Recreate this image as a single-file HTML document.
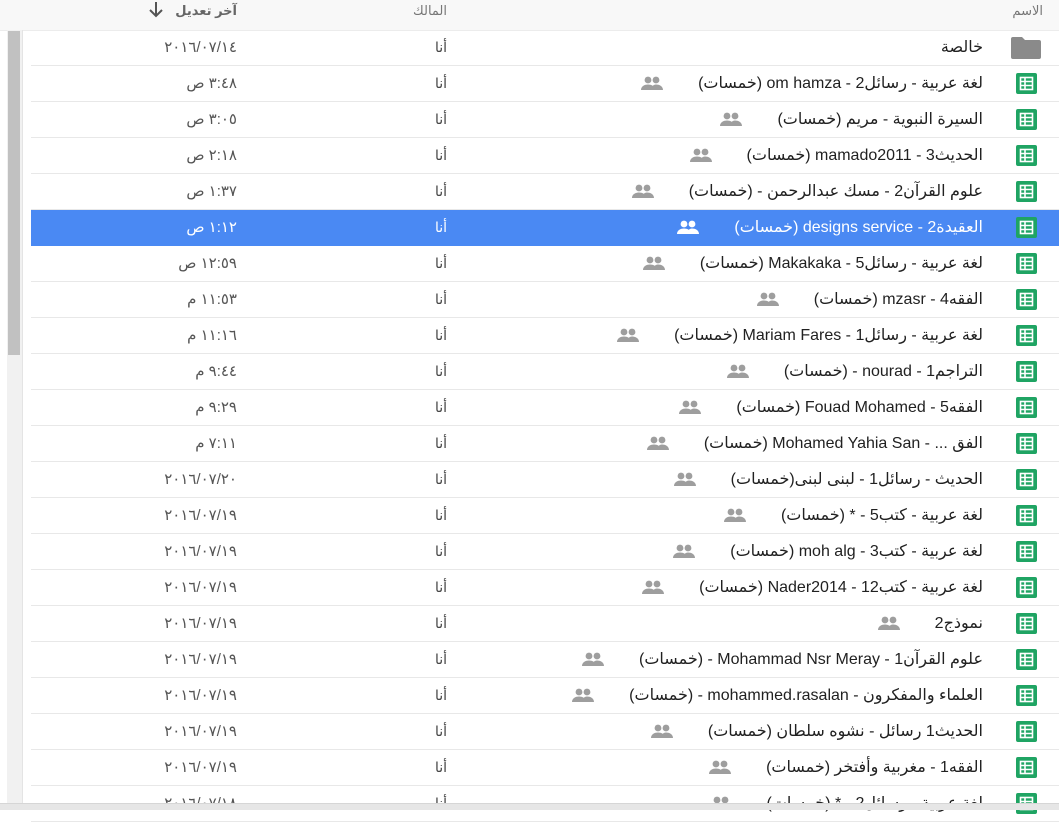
<!DOCTYPE html>
<html><head><meta charset="utf-8"><style>
body{margin:0;width:1059px;height:809px;overflow:hidden;background:#fff;font-family:"Liberation Sans","DejaVu Sans",sans-serif;position:relative}
.hdr{position:absolute;left:0;top:0;width:1059px;height:30px;background:#f8f8f8;border-bottom:1px solid #ececec}
.h{position:absolute;top:3px;font-size:13px;color:#777;direction:rtl}
.track{position:absolute;left:7px;top:30px;width:15px;height:779px;background:#f1f1f1;border-right:1px solid #e4e4e4}
.thumb{position:absolute;left:8px;top:31px;width:12px;height:324px;background:#c1c1c1}
.row{position:absolute;left:31px;width:1028px;height:35px;border-bottom:1px solid #e8e8e8}
.row.sel{background:#4a89f3;border-bottom-color:#4a89f3}
.nm{position:absolute;right:76px;top:7px;font-size:16px;color:#212121;direction:rtl;white-space:nowrap;display:flex;align-items:center}
.sel .nm,.sel .ow,.sel .dt{color:#fff}
.ppl{margin-right:34px;display:inline-block;width:24px;height:16px}
.ow{position:absolute;right:612px;top:9px;font-size:14px;color:#444;direction:rtl}
.dt{position:absolute;right:822px;top:8px;font-size:15px;color:#555;direction:rtl}
.ic{position:absolute;left:985px;top:7px;width:21px;height:21px;background:#1fa463;border-radius:2px}
.ic svg{position:absolute;left:0;top:0}
.fold{position:absolute;left:980px;top:7px;width:30px;height:22px}
.bot{position:absolute;left:0;top:803px;width:1059px;height:6px;background:#e6e6e6;border-top:1px solid #d6d6d6}
</style></head><body>
<div class="hdr"></div>
<div class="h" style="right:16px">الاسم</div>
<div class="h" style="right:612px">المالك</div>
<div class="h" style="right:822px;font-weight:bold;color:#666">آخر تعديل</div>
<svg style="position:absolute;left:146px;top:0" width="20" height="20" viewBox="0 0 20 20"><path d="M10 2v14M4 10l6 6 6-6" stroke="#555" stroke-width="2" fill="none"/></svg>
<div class="track"></div><div class="thumb"></div>
<div id="rows"></div>
<div class="bot"></div>
<script>
var P='<svg class="ppl" viewBox="0 0 24 16"><circle cx="8" cy="5" r="3.4" fill="C"/><circle cx="16" cy="5" r="3.4" fill="C"/><path d="M1 15c0-4 4-5.5 7-5.5s7 1.5 7 5.5z M11 15c0-3 2-5.5 5-5.5s7 1.5 7 5.5z" fill="C"/></svg>';
var d=[
["خالصة","٢٠١٦/٠٧/١٤",0,0],
["لغة عربية - رسائل2 - om hamza (خمسات)","٣:٤٨ ص",1],
["السيرة النبوية - مريم (خمسات)","٣:٠٥ ص",1],
["الحديث3 - mamado2011 (خمسات)","٢:١٨ ص",1],
["علوم القرآن2 - مسك عبدالرحمن - (خمسات)","١:٣٧ ص",1],
["العقيدة2 - designs service (خمسات)","١:١٢ ص",1,1],
["لغة عربية - رسائل5 - Makakaka (خمسات)","١٢:٥٩ ص",1],
["الفقه4 - mzasr (خمسات)","١١:٥٣ م",1],
["لغة عربية - رسائل1 - Mariam Fares (خمسات)","١١:١٦ م",1],
["التراجم1 - nourad - (خمسات)","٩:٤٤ م",1],
["الفقه5 - Fouad Mohamed (خمسات)","٩:٢٩ م",1],
["الفق ... - Mohamed Yahia San (خمسات)","٧:١١ م",1],
["الحديث - رسائل1 - لبنى لبنى(خمسات)","٢٠١٦/٠٧/٢٠",1],
["لغة عربية - كتب5 - * (خمسات)","٢٠١٦/٠٧/١٩",1],
["لغة عربية - كتب3 - moh alg (خمسات)","٢٠١٦/٠٧/١٩",1],
["لغة عربية - كتب12 - Nader2014 (خمسات)","٢٠١٦/٠٧/١٩",1],
["نموذج2","٢٠١٦/٠٧/١٩",1],
["علوم القرآن1 - Mohammad Nsr Meray - (خمسات)","٢٠١٦/٠٧/١٩",1],
["العلماء والمفكرون - mohammed.rasalan - (خمسات)","٢٠١٦/٠٧/١٩",1],
["الحديث1 رسائل - نشوه سلطان (خمسات)","٢٠١٦/٠٧/١٩",1],
["الفقه1 - مغربية وأفتخر (خمسات)","٢٠١٦/٠٧/١٩",1],
["لغة عربية - رسائل2 - * (خمسات)","٢٠١٦/٠٧/١٨",1]];
var h='';
d.forEach(function(r,i){
 var sel=r[3]?' sel':'';
 var icon=i==0?'<svg class="fold" viewBox="0 0 30 22"><path d="M2 0h9l3 3h14a2 2 0 0 1 2 2v15a2 2 0 0 1-2 2H2a2 2 0 0 1-2-2V2a2 2 0 0 1 2-2z" fill="#8a8a8a"/></svg>':
 '<div class="ic"><svg width="21" height="21" viewBox="0 0 21 21"><rect x="4.5" y="4.5" width="12" height="12" fill="none" stroke="#fff" stroke-width="1.6"/><path d="M4.5 8.5h12M4.5 12.5h12M9 4.5v12" stroke="#fff" stroke-width="1.6"/></svg></div>';
 var pp=r[2]?P.replace(/C/g,r[3]?'#fff':'#9e9e9e'):'';
 h+='<div class="row'+sel+'" style="top:'+(30+36*i)+'px">'+icon+'<div class="nm"><span>'+r[0]+'</span>'+pp+'</div><div class="ow">أنا</div><div class="dt">'+r[1]+'</div></div>';
});
document.getElementById('rows').innerHTML=h;
</script>
</body></html>
